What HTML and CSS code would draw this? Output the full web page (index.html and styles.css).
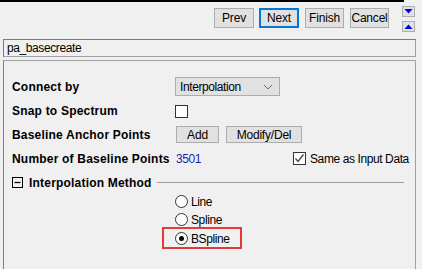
FILE: index.html
```html
<!DOCTYPE html>
<html lang="en">
<head>
    <meta charset="UTF-8">
    <title>pa_basecreate</title>
    <link rel="stylesheet" href="styles.css">
</head>
<body>
    <div class="topline"></div>

    <div class="toolbar">
        <button class="btn btn-prev">Prev</button>
        <button class="btn btn-next">Next</button>
        <button class="btn btn-finish">Finish</button>
        <button class="btn btn-cancel">Cancel</button>
        <div class="arrows">
            <div class="arrow-btn">
                <svg width="11" height="9" viewBox="0 0 11 9"><polygon points="1.5,2 9.5,2 5.5,6.5" fill="#0000e6"/></svg>
            </div>
            <div class="arrow-btn">
                <svg width="11" height="9" viewBox="0 0 11 9"><polygon points="1.5,7 9.5,7 5.5,2.5" fill="#0000e6"/></svg>
            </div>
        </div>
    </div>

    <div class="name-field">pa_basecreate</div>

    <div class="panel">
        <div class="form-grid">
            <div class="label">Connect by</div>
            <div class="control">
                <div class="dropdown">
                    <span>Interpolation</span>
                    <svg width="10" height="6" viewBox="0 0 10 6"><polyline points="1,1 5,5 9,1" fill="none" stroke="#6d6d6d" stroke-width="1"/></svg>
                </div>
            </div>

            <div class="label">Snap to Spectrum</div>
            <div class="control">
                <span class="checkbox"></span>
            </div>

            <div class="label">Baseline Anchor Points</div>
            <div class="control buttons">
                <button class="btn btn-small btn-add">Add</button>
                <button class="btn btn-small btn-modify">Modify/Del</button>
            </div>

            <div class="label">Number of Baseline Points</div>
            <div class="control">
                <span class="count">3501</span>
                <span class="check-label">
                    <span class="checkbox">
                        <svg width="11" height="11" viewBox="0 0 11 11"><polyline points="1.5,5.5 4,8.5 9.5,1.5" fill="none" stroke="#444" stroke-width="1.3"/></svg>
                    </span>
                    Same as Input Data
                </span>
            </div>
        </div>

        <div class="section-head">
            <span class="collapse-box">
                <svg width="9" height="9" viewBox="0 0 9 9"><line x1="1.5" y1="4.5" x2="7.5" y2="4.5" stroke="#000" stroke-width="1.2"/></svg>
            </span>
            <span class="section-title">Interpolation Method</span>
            <span class="section-line"></span>
        </div>

        <div class="radio-list">
            <div class="radio-item"><span class="radio"></span>Line</div>
            <div class="radio-item"><span class="radio"></span>Spline</div>
            <div class="radio-item highlight"><span class="radio checked"></span>BSpline</div>
        </div>
    </div>
</body>
</html>
```

FILE: styles.css
```css
body {
    margin: 0;
    background-color: #f0f0f0;
    font-family: "Liberation Sans", Arial, sans-serif;
    font-size: 12px;
    letter-spacing: -0.4px;
    color: #000;
    width: 422px;
    height: 269px;
    overflow: hidden;
}
.topline {
    width: 404px;
    height: 2px;
    background-color: #000;
}
.toolbar {
    display: flex;
    justify-content: flex-end;
    align-items: flex-start;
    gap: 5px;
    height: 37px;
    padding-right: 7px;
}
.btn {
    font-family: "Liberation Sans", Arial, sans-serif;
    font-size: 12px;
    letter-spacing: -0.2px;
    color: #000;
    background-color: #e1e1e1;
    border: 1px solid #adadad;
    padding: 0;
    margin: 0;
    height: 20px;
}
.toolbar .btn {
    margin-top: 6px;
}
.btn-prev { width: 40px; }
.btn-next {
    width: 40px;
    border: 2px solid #0078d7;
}
.btn-finish { width: 39px; margin-left: 1px; }
.btn-cancel { width: 39px; margin-left: 1px; }
.arrows {
    display: flex;
    flex-direction: column;
    gap: 4px;
    margin-top: 4px;
    margin-left: 8px;
}
.arrow-btn {
    width: 11px;
    height: 9px;
    border: 1px solid #adadad;
    background-color: #e1e1e1;
    display: flex;
}
.name-field {
    margin: 0 6px 0 3px;
    height: 16px;
    line-height: 16px;
    padding-left: 3px;
    border: 1px solid #a0a0a0;
    border-top-color: #7a7a7a;
    border-left-color: #7a7a7a;
    background-color: #f0f0f0;
}
.panel {
    margin: 3px 6px 0 3px;
    height: 192px;
    border: 1px solid #a0a0a0;
    border-left-color: #828282;
    border-bottom: none;
    padding-top: 16px;
}
.form-grid {
    display: grid;
    grid-template-columns: 163px 1fr;
    grid-template-rows: 19px 14px 17px 15px;
    row-gap: 8px;
    padding-left: 8px;
    align-items: center;
}
.label {
    font-weight: bold;
    letter-spacing: 0.2px;
}
.control {
    display: flex;
    align-items: center;
    height: 100%;
    white-space: nowrap;
}
.dropdown {
    width: 93px;
    height: 17px;
    border: 1px solid #adadad;
    background-color: #e1e1e1;
    display: flex;
    align-items: center;
    justify-content: space-between;
    padding: 0 6px 0 4px;
}
.checkbox {
    width: 11px;
    height: 11px;
    border: 1px solid #333;
    background-color: #fff;
    display: inline-flex;
}
.buttons {
    gap: 7px;
}
.btn-small {
    height: 17px;
    margin-left: 1px;
}
.btn-add { width: 43px; }
.btn-modify { width: 76px; margin-left: 0; }
.count {
    color: #1f1fa0;
    width: 117px;
    margin-left: 1px;
}
.check-label {
    display: flex;
    align-items: center;
    gap: 4px;
}
.section-head {
    display: flex;
    align-items: center;
    margin-top: 10px;
    padding-left: 8px;
    padding-right: 11px;
    height: 13px;
}
.collapse-box {
    width: 9px;
    height: 9px;
    border: 1px solid #000;
    display: inline-flex;
    margin-right: 6px;
}
.section-title {
    font-weight: bold;
    letter-spacing: 0.2px;
}
.section-line {
    flex: 1;
    height: 1px;
    background-color: #a0a0a0;
    margin-left: 5px;
}
.radio-list {
    display: flex;
    flex-direction: column;
    align-items: flex-start;
    gap: 5px;
    margin-top: 6px;
    padding-left: 171px;
}
.radio-item {
    display: flex;
    align-items: center;
    gap: 3px;
    height: 13px;
}
.radio {
    width: 11px;
    height: 11px;
    border: 1px solid #333;
    border-radius: 50%;
    background-color: #fff;
    display: inline-flex;
    align-items: center;
    justify-content: center;
}
.radio.checked::after {
    content: "";
    width: 5px;
    height: 5px;
    border-radius: 50%;
    background-color: #000;
}
.highlight {
    border: 2px solid #e5393a;
    padding: 3px 10px 2px 11px;
    margin-left: -13px;
    margin-top: -4px;
}
```
